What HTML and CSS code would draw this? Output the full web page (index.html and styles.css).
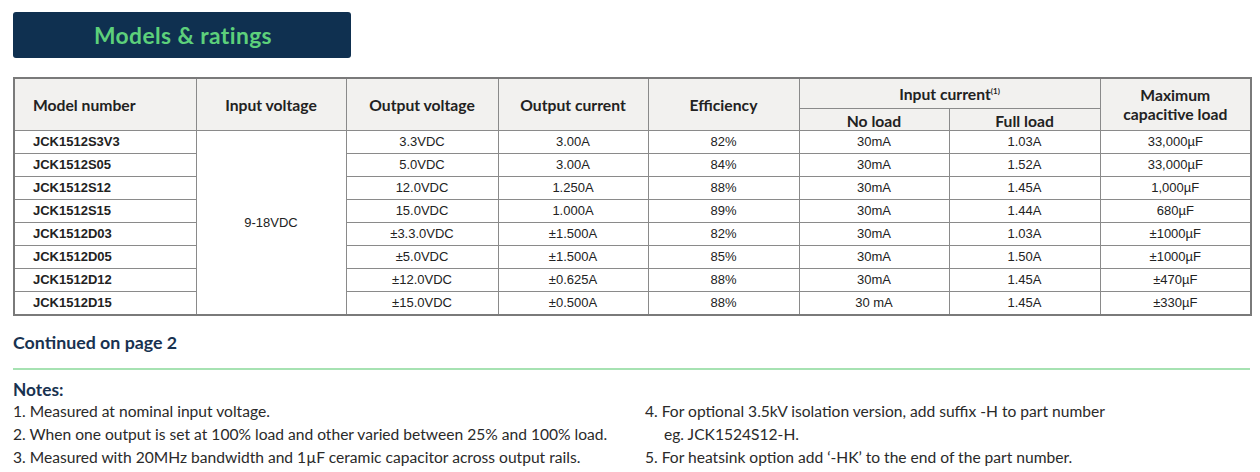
FILE: index.html
```html
<!DOCTYPE html>
<html>
<head>
<meta charset="utf-8">
<link rel="stylesheet" href="styles.css">
</head>
<body>
<div class="page">
  <div class="title">Models &amp; ratings</div>
  <table class="ratings">
    <colgroup>
      <col style="width:182px"><col style="width:150px"><col style="width:152px"><col style="width:150px">
      <col style="width:151px"><col style="width:150px"><col style="width:151px"><col style="width:151px">
    </colgroup>
    <thead>
      <tr class="h1">
        <th rowspan="2" class="left">Model number</th>
        <th rowspan="2">Input voltage</th>
        <th rowspan="2">Output voltage</th>
        <th rowspan="2">Output current</th>
        <th rowspan="2">Efficiency</th>
        <th colspan="2" class="ic">Input current<sup>(1)</sup></th>
        <th rowspan="2" class="maxcap">Maximum<br>capacitive load</th>
      </tr>
      <tr class="h2">
        <th>No load</th>
        <th>Full load</th>
      </tr>
    </thead>
    <tbody>
      <tr><td class="model">JCK1512S3V3</td><td rowspan="8" class="vin">9-18VDC</td><td>3.3VDC</td><td>3.00A</td><td>82%</td><td>30mA</td><td>1.03A</td><td>33,000µF</td></tr>
      <tr><td class="model">JCK1512S05</td><td>5.0VDC</td><td>3.00A</td><td>84%</td><td>30mA</td><td>1.52A</td><td>33,000µF</td></tr>
      <tr><td class="model">JCK1512S12</td><td>12.0VDC</td><td>1.250A</td><td>88%</td><td>30mA</td><td>1.45A</td><td>1,000µF</td></tr>
      <tr><td class="model">JCK1512S15</td><td>15.0VDC</td><td>1.000A</td><td>89%</td><td>30mA</td><td>1.44A</td><td>680µF</td></tr>
      <tr><td class="model">JCK1512D03</td><td>±3.3.0VDC</td><td>±1.500A</td><td>82%</td><td>30mA</td><td>1.03A</td><td>±1000µF</td></tr>
      <tr><td class="model">JCK1512D05</td><td>±5.0VDC</td><td>±1.500A</td><td>85%</td><td>30mA</td><td>1.50A</td><td>±1000µF</td></tr>
      <tr><td class="model">JCK1512D12</td><td>±12.0VDC</td><td>±0.625A</td><td>88%</td><td>30mA</td><td>1.45A</td><td>±470µF</td></tr>
      <tr><td class="model">JCK1512D15</td><td>±15.0VDC</td><td>±0.500A</td><td>88%</td><td>30 mA</td><td>1.45A</td><td>±330µF</td></tr>
    </tbody>
  </table>
  <div class="continued">Continued on page 2</div>
  <hr class="rule">
  <div class="notes-title">Notes:</div>
  <div class="notes">
    <ol class="col">
      <li>1. Measured at nominal input voltage.</li>
      <li>2. When one output is set at 100% load and other varied between 25% and 100% load.</li>
      <li>3. Measured with 20MHz bandwidth and 1µF ceramic capacitor across output rails.</li>
    </ol>
    <ol class="col">
      <li>4. For optional 3.5kV isolation version, add suffix -H to part number</li>
      <li class="indent">eg. JCK1524S12-H.</li>
      <li>5. For heatsink option add ‘-HK’ to the end of the part number.</li>
    </ol>
  </div>
</div>
</body>
</html>
```
FILE: styles.css
```css
html, body {
  margin: 0;
  padding: 0;
  background: #ffffff;
}
.page {
  padding: 12px 10px 0 13px;
  font-family: Lato, "Liberation Sans", sans-serif;
}
.title {
  width: 338px;
  height: 46px;
  box-sizing: border-box;
  background: #0f3050;
  border-radius: 3px;
  color: #5dd07b;
  font-weight: 700;
  font-size: 22.8px;
  letter-spacing: 0.4px;
  display: flex;
  align-items: center;
  justify-content: center;
  padding-left: 2px;
}
.ratings {
  margin-top: 19px;
  border-collapse: collapse;
  table-layout: fixed;
  width: 1237px;
  border: 2px solid #7a7a7a;
}
.ratings th {
  background: #f2f1ef;
  font-family: Lato, "Liberation Sans", sans-serif;
  font-weight: 700;
  font-size: 15.7px;
  color: #222;
  border: 1px solid #8a8a8a;
  padding: 0;
  text-align: center;
  line-height: 18px;
}
.ratings th.left {
  text-align: left;
  padding-left: 18px;
}
.ratings tr.h1 th.ic {
  height: 28px;
  padding-top: 1px;
}
.ratings tr.h2 th {
  height: 19px;
  padding-top: 2px;
}
.ratings th sup {
  font-size: 8px;
  vertical-align: 6px;
  line-height: 0;
}
.ratings th.maxcap {
  line-height: 19px;
  padding-top: 1px;
}
.ratings td {
  font-family: "Liberation Sans", Arial, sans-serif;
  font-size: 13px;
  color: #222;
  text-align: center;
  height: 21px;
  padding: 0 0 1px 0;
  border: 1px solid #8a8a8a;
}
.ratings td.model {
  text-align: left;
  padding-left: 18px;
  font-weight: 700;
}
.ratings td.vin {
  vertical-align: middle;
  padding: 0;
}
.continued {
  margin-top: 15px;
  font-weight: 700;
  font-size: 17.8px;
  color: #183250;
  line-height: 22px;
}
.rule {
  margin: 15px 0 0 0;
  width: 1237px;
  border: 0;
  height: 2px;
  background: #a6e2b2;
}
.notes-title {
  margin-top: 9px;
  font-weight: 700;
  font-size: 17.3px;
  color: #183250;
  line-height: 21px;
}
.notes {
  display: flex;
  margin-top: 0;
}
.col {
  list-style: none;
  margin: 0;
  padding: 0;
  font-size: 15.6px;
  color: #2a2a2a;
  line-height: 23px;
}
.col:first-child {
  width: 632px;
}
.indent {
  padding-left: 19px;
}
```
